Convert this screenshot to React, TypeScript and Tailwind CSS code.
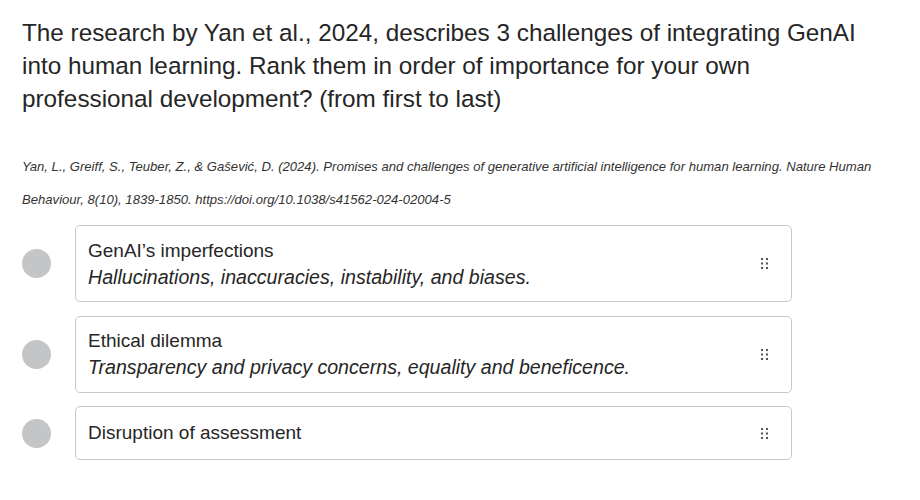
import React from "react";

const items = [
  { title: "GenAI’s imperfections", desc: "Hallucinations, inaccuracies, instability, and biases." },
  { title: "Ethical dilemma", desc: "Transparency and privacy concerns, equality and beneficence." },
  { title: "Disruption of assessment", desc: "" },
];

function Handle() {
  return (
    <svg width="7" height="11" viewBox="0 0 7 11" className="shrink-0">
      {[0, 1, 2].map((r) =>
        [0, 1].map((c) => (
          <rect key={`${r}-${c}`} x={c * 5} y={r * 4.5} width="2" height="2" fill="#555" />
        ))
      )}
    </svg>
  );
}

export default function App() {
  return (
    <div className="w-[920px] h-[500px] bg-white pl-[22px] pt-[16px]" style={{ fontFamily: '"Liberation Sans", Arial, sans-serif' }}>
      <p className="text-[24.3px] leading-[33px] text-[#262626] w-[845px]">
        The research by Yan et al., 2024, describes 3 challenges of integrating GenAI into human learning. Rank them in order of importance for your own professional development? (from first to last)
      </p>
      <p className="mt-[35px] text-[13.1px] leading-[33px] italic text-[#333] w-[870px]">
        Yan, L., Greiff, S., Teuber, Z., &amp; Gašević, D. (2024). Promises and challenges of generative artificial intelligence for human learning. Nature Human Behaviour, 8(10), 1839-1850. https://doi.org/10.1038/s41562-024-02004-5
      </p>
      <div className="mt-[9px] flex flex-col gap-[13.5px]">
        {items.map((it) => (
          <div key={it.title} className="flex items-center">
            <div className="w-[29px] h-[29px] rounded-full bg-[#c4c5c7] shrink-0"></div>
            <div
              className={
                it.desc
                  ? "ml-[24px] w-[717px] border border-[#c8c8c8] rounded-[5px] pl-[12px] pr-[23px] py-[11.5px] flex items-center"
                  : "ml-[24px] w-[717px] border border-[#c8c8c8] rounded-[5px] pl-[12px] pr-[23px] py-[13px] flex items-center"
              }
            >
              <div className="flex-1 leading-[26px] text-[#262626]">
                <div className="text-[19px]">{it.title}</div>
                {it.desc && <div className="italic text-[19.6px]">{it.desc}</div>}
              </div>
              <Handle />
            </div>
          </div>
        ))}
      </div>
    </div>
  );
}
